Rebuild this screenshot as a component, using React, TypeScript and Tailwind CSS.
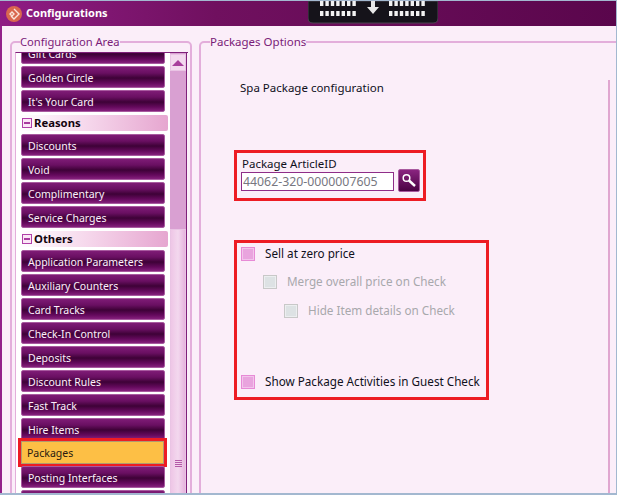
import React from 'react';

const uiFont = "[font-family:'Noto_Sans','DejaVu_Sans',sans-serif]";

function NavItem({ label, active }: { label: string; active?: boolean }) {
  if (active) {
    return (
      <div className="h-[29px] w-[149px] -mt-[4px] -mb-[3px] ml-[2px] shrink-0 border-[3px] border-[#ed1c24] flex">
        <div className="flex-1 flex items-center pl-[5px] pt-[3px] text-[10.5px] text-[#2a1a10] bg-[#fdbf45] border border-[#b09a70]">
          {label}
        </div>
      </div>
    );
  }
  return (
    <div className="h-[22px] w-[144px] ml-[5px] shrink-0 flex items-center pl-[6px] pt-[3px] text-[10.5px] text-[#fdf0fb] rounded-[2px] border border-[#a85a9f] bg-[linear-gradient(180deg,#7f1c76_0%,#6a0f62_30%,#3e0237_55%,#64095c_80%,#85207c_100%)]">
      {label}
    </div>
  );
}

function SectionHeader({ label }: { label: string }) {
  return (
    <div className="h-[16px] w-[149px] ml-[3px] mb-px shrink-0 flex items-center rounded-r-[2px] bg-[linear-gradient(90deg,#ffffff_0%,#f6d8ec_45%,#e6a6d0_100%)]">
      <span className="w-[10px] h-[10px] ml-[3px] border border-[#b040a8] bg-[#fbe6f6] flex items-center justify-center">
        <span className="w-[6px] h-[2px] bg-[#a83a9f]" />
      </span>
      <span className="ml-[2px] text-[11.3px] font-bold text-[#14040f]">{label}</span>
    </div>
  );
}

function Check({ label, disabled, indent }: { label: string; disabled?: boolean; indent: string }) {
  return (
    <div className={`flex items-center h-[14px] ${indent}`}>
      <span
        className={
          disabled
            ? 'w-[14px] h-[14px] shrink-0 border border-[#c8c8c8] bg-[#dde2e4] shadow-[inset_0_0_0_1px_#eceef0]'
            : 'w-[14px] h-[14px] shrink-0 border border-[#e78ad6] bg-[#e9a4de] shadow-[inset_0_0_0_1px_#f3c4ec]'
        }
      />
      <span className={`ml-[10px] text-[11.7px] whitespace-nowrap ${disabled ? 'text-[#a8a8ac]' : 'text-[#10101c]'}`}>{label}</span>
    </div>
  );
}

function GrabHandle() {
  const xs = [0, 1, 2, 3, 4, 5, 6];
  return (
    <svg width="130" height="23" viewBox="0 0 130 23" className="block">
      <path d="M0 0h130v17q0 5-5 5H5q-5 0-5-5z" fill="#15131a" stroke="#4a4650" strokeWidth="1" />
      {xs.map((i) => (
        <g key={i} fill="#f2f2f2">
          <rect x={12 + i * 5.4} y="0" width="3.4" height="5" />
          <rect x={12 + i * 5.4} y="10" width="3.4" height="5" />
          <rect x={81 + i * 5.4} y="0" width="3.4" height="5" />
          <rect x={81 + i * 5.4} y="10" width="3.4" height="5" />
        </g>
      ))}
      <path d="M63 0h4v6h4l-6 7-6-7h4z" fill="#e8e8e8" />
    </svg>
  );
}

export default function App() {
  return (
    <div className={`w-[617px] h-[495px] overflow-hidden flex flex-col bg-[#a3b8d0] pt-px pr-px pb-[2px] ${uiFont}`}>
      <div className="relative h-[25px] shrink-0 flex items-center bg-[linear-gradient(90deg,#8f1c84_0%,#70105f_35%,#5a064c_100%)]">
        <svg width="16" height="16" viewBox="0 0 16 16" fill="none" className="ml-[6px]">
          <circle cx="8" cy="8" r="8" fill="#d9674f" />
          <path d="M8 3l5 5-5 5-2.500-2.500 2.500-2.500-2-2-2 2 1.500 1.500" stroke="#fbe4dc" strokeWidth="1.400" />
        </svg>
        <span className="ml-[4px] text-[11px] font-bold text-white">Configurations</span>
        <div className="absolute left-[308px] top-0">
          <GrabHandle />
        </div>
      </div>

      <div className="flex-1 min-h-0 flex bg-[#fbeef9] border-l-[2px] border-[#93208a] overflow-hidden">
        <fieldset className="w-[182px] ml-[8px] mt-[8px] h-[500px] shrink-0 border-[2px] border-[#e3aedb] rounded-[5px] pl-[2px] pr-[2px]">
          <legend className="ml-[6px] text-[11.2px] leading-[16px] text-[#7a1b78]">Configuration Area</legend>
          <div className="flex h-[460px] mt-[2px] ml-[1px] border-t border-[#80207a] border-l border-l-[#e3aedb]">
            <div className="w-[154px] bg-white overflow-hidden flex flex-col gap-[2px] shrink-0">
              <div className="-mt-[11px] flex flex-col gap-[2px]">
                <NavItem label="Gift Cards" />
                <NavItem label="Golden Circle" />
                <NavItem label="It's Your Card" />
              </div>
              <div className="flex flex-col gap-[2px] mt-px">
                <SectionHeader label="Reasons" />
                <NavItem label="Discounts" />
                <NavItem label="Void" />
                <NavItem label="Complimentary" />
                <NavItem label="Service Charges" />
              </div>
              <div className="flex flex-col gap-[2px] mt-px">
                <SectionHeader label="Others" />
                <NavItem label="Application Parameters" />
                <NavItem label="Auxiliary Counters" />
                <NavItem label="Card Tracks" />
                <NavItem label="Check-In Control" />
                <NavItem label="Deposits" />
                <NavItem label="Discount Rules" />
                <NavItem label="Fast Track" />
                <NavItem label="Hire Items" />
                <NavItem label="Packages" active />
                <NavItem label="Posting Interfaces" />
                <NavItem label="" />
              </div>
            </div>
            <div className="w-[17px] shrink-0 bg-[#d9a0d2] border-r border-[#80207a] flex flex-col items-center">
              <div className="w-[16px] h-[17px] mt-px shrink-0 flex items-center justify-center border border-[#e9c4e4] bg-[#f3d8ee]">
                <span className="w-0 h-0 border-l-[6px] border-r-[6px] border-b-[6px] border-l-transparent border-r-transparent border-b-[#a83e9c]" />
              </div>
              <div className="w-[16px] mt-[158px] h-[300px] shrink-0 border border-[#e9c4e4] bg-[linear-gradient(90deg,#eec6e6,#f3d8ee_50%,#e6b4de)] flex flex-col items-center pt-[230px] gap-px">
                <span className="w-[7px] h-px bg-[#b45aa8]" />
                <span className="w-[7px] h-px bg-[#b45aa8]" />
                <span className="w-[7px] h-px bg-[#b45aa8]" />
                <span className="w-[7px] h-px bg-[#b45aa8]" />
              </div>
            </div>
          </div>
        </fieldset>

        <fieldset className="w-[440px] ml-[7px] mt-[8px] h-[500px] shrink-0 border-[2px] border-[#e3aedb] rounded-tl-[5px]">
          <legend className="ml-[9px] text-[11.5px] leading-[16px] text-[#7a1b78]">Packages Options</legend>
          <div className="flex">
            <div className="w-[407px] shrink-0 pl-[33px] flex flex-col items-start">
              <p className="mt-[30px] ml-[6px] h-[16px] leading-[16px] text-[11.5px] text-[#10101c]">Spa Package configuration</p>
              <div className="mt-[54px] w-[192px] h-[51px] border-[3px] border-[#ed1c24] flex flex-col pl-[4px]">
                <label className="mt-[4px] ml-px h-[14px] leading-[14px] text-[11.5px] text-[#10101c]">Package ArticleID</label>
                <div className="flex items-start">
                  <input
                    readOnly
                    value="44062-320-0000007605"
                    className="w-[153px] h-[19px] mt-px px-[1px] border border-[#8f2d88] bg-white text-[12.300px] text-[#77777f] outline-none"
                  />
                  <button className="w-[22px] h-[23px] -mt-[2px] ml-[4px] rounded-[2px] border border-[#a85a9f] bg-[linear-gradient(180deg,#8a2480,#4a0343)] flex items-center justify-center">
                    <svg width="16" height="16" viewBox="0 0 16 16" fill="none">
                      <circle cx="5.500" cy="5" r="3.300" stroke="#fff" strokeWidth="1.500" />
                      <path d="M8 7.500l6 5.500" stroke="#fff" strokeWidth="2.400" />
                    </svg>
                  </button>
                </div>
              </div>
              <div className="mt-[39px] w-[255px] h-[160px] border-[3px] border-[#ed1c24] flex flex-col">
                <div className="mt-[4px]">
                  <Check label="Sell at zero price" indent="ml-[4px]" />
                </div>
                <div className="mt-[14px]">
                  <Check label="Merge overall price on Check" indent="ml-[26px]" disabled />
                </div>
                <div className="mt-[15px]">
                  <Check label="Hide Item details on Check" indent="ml-[47px]" disabled />
                </div>
                <div className="mt-[57px]">
                  <Check label="Show Package Activities in Guest Check" indent="ml-[4px]" />
                </div>
              </div>
            </div>
            <div className="mt-[30px] w-[2px] h-[420px] bg-[#e0a6d0] shrink-0" />
          </div>
        </fieldset>
      </div>
    </div>
  );
}
